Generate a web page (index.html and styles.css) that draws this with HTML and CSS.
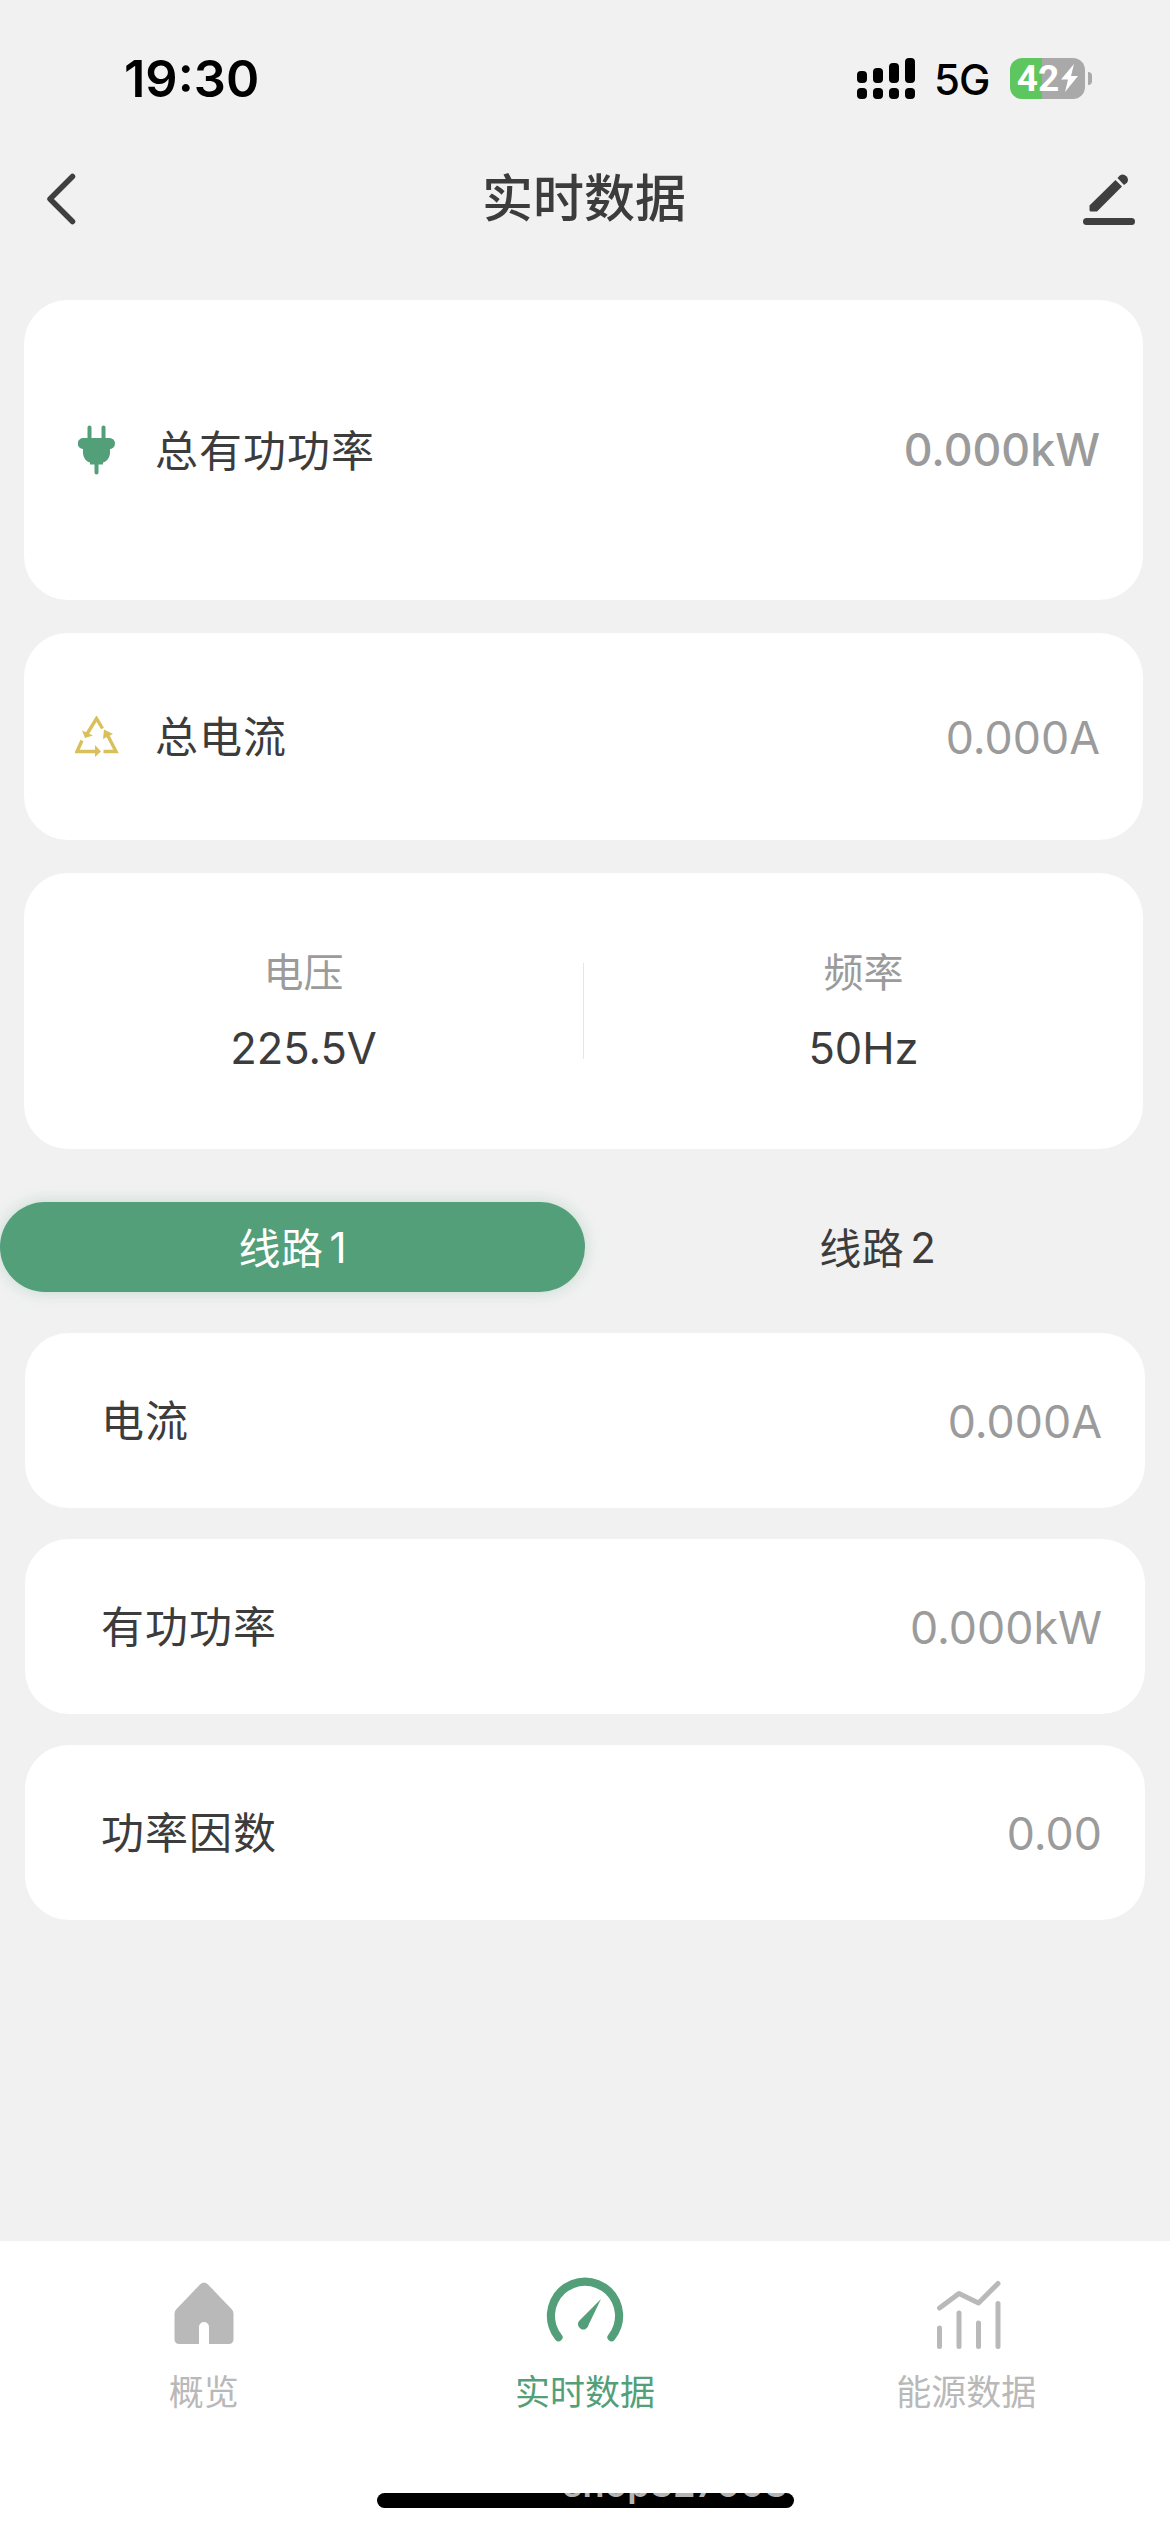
FILE: index.html
```html
<!DOCTYPE html>
<html lang="zh-CN">
<head>
<meta charset="utf-8">
<title>实时数据</title>
<link rel="stylesheet" href="styles.css">
</head>
<body>
<div class="app">
  <header class="status">
    <span class="clock">19:30</span>
    <div class="status-right">
      <svg class="signal" width="58" height="41" viewBox="0 0 58 41"><rect x="0" y="13" width="10" height="12" rx="4"/><rect x="16" y="10" width="10" height="15" rx="4"/><rect x="32" y="5" width="10" height="20" rx="4"/><rect x="48" y="0" width="10" height="25" rx="4"/><rect x="0" y="30" width="10" height="11" rx="4"/><rect x="16" y="30" width="10" height="11" rx="4"/><rect x="32" y="30" width="10" height="11" rx="4"/><rect x="48" y="30" width="10" height="11" rx="4"/></svg>
      <span class="network">5G</span>
      <div class="battery">
        <span class="battery-body">42<svg width="19" height="28" viewBox="0 0 19 28"><path fill="#fff" d="M14 0 1 15.500h7L5 28 18 12h-7z"/></svg></span>
        <i class="battery-cap"></i>
      </div>
    </div>
  </header>
  <nav class="titlebar">
    <svg class="back" width="30" height="52" viewBox="0 0 30 52"><path d="M25.500 3.500 3 26l22.500 22.500"/></svg>
    <h1>实时数据</h1>
    <svg class="edit" width="52" height="52" viewBox="0 0 52 52"><path d="M32.500 7 39 13.500 14 38.500H8q-1.500 0-1.500-1.500V32.500z"/><path d="M34.500 5 36.800 2.500a5.200 5.200 0 0 1 7.200 7.200L41 12z"/><rect x="0" y="45" width="52" height="7" rx="3.500"/></svg>
  </nav>
  <main>
    <section class="card card-power">
      <svg class="ico" width="44" height="50" viewBox="0 0 44 50"><path fill="#529f79" d="M9.500 13V2.500a2 2 0 0 1 4 0V13h10V2.500a2 2 0 0 1 4 0V13h4a5.500 5.500 0 0 1 0 11H32v3.500c0 5-3 9-7 10v2h-4.500V47.500a2 2 0 0 1-4 0V39.500H12v-2c-4-1-7-5-7-10V24a5.500 5.500 0 0 1 .5-11z"/></svg>
      <span class="label">总有功功率</span><span class="value strong">0.000kW</span>
    </section>
    <section class="card card-current">
      <svg class="ico cycle" width="44" height="42" viewBox="0 0 44 42"><g fill="none" stroke="#d9c05a" stroke-width="3.400"><path d="M27.500 12.500 21.500 2.500 12 18"/><path d="M7 24.500 2 35.500H20"/><path d="M28.500 35.500H41L32 18"/></g><g fill="#d9c05a"><path d="M7 14.500 10 22 18 19.500z"/><path d="M20 29 26 35.500 20 41z"/><path d="M28 23 29 13.500 38 18z"/></g></svg>
      <span class="label">总电流</span><span class="value">0.000A</span>
    </section>
    <section class="card card-pair">
      <div class="metric"><span class="name">电压</span><span class="num">225.5V</span></div>
      <i class="divider"></i>
      <div class="metric"><span class="name">频率</span><span class="num">50Hz</span></div>
    </section>
    <div class="tabs">
      <div class="tab active"><span class="line">线路</span><span>1</span></div>
      <div class="tab"><span class="line">线路</span><span>2</span></div>
    </div>
    <section class="rows">
      <div class="card row"><span class="label">电流</span><span class="value">0.000A</span></div>
      <div class="card row"><span class="label">有功功率</span><span class="value">0.000kW</span></div>
      <div class="card row"><span class="label">功率因数</span><span class="value">0.00</span></div>
    </section>
  </main>
  <footer class="bottom">
    <div class="nav">
      <div class="item"><svg width="80" height="80" viewBox="0 0 80 80"><path fill="#b9b9b9" d="M36.500 9q3.500-3 7 0L67.500 34q2 2 2 4.500V64q0 5-5 5H45V52a5 5 0 0 0-10 0V69H15.500q-5 0-5-5V38.500q0-2.500 2-4.500z"/></svg><span>概览</span></div>
      <div class="item on"><svg width="80" height="80" viewBox="0 0 80 80"><path fill="#529f79" fill-rule="evenodd" d="M10.500 65A38.200 38.200 0 1 1 69.500 65 4 4 0 0 1 63.500 59.500 30 30 0 1 0 16.500 59.500 4 4 0 0 1 10.500 65z"/><path fill="#529f79" d="M56 24 34.500 45.500a5.300 5.300 0 1 0 9 4.500z"/></svg><span>实时数据</span></div>
      <div class="item"><svg width="80" height="80" viewBox="0 0 80 80"><path fill="none" stroke="#b9b9b9" stroke-width="5" stroke-linecap="round" stroke-linejoin="round" d="M13.500 33 33 18.500 52.500 28 72 8.500M13.500 53V71.500M33 38V71.500M52.500 48V71.500M72 28.500V71.500"/></svg><span>能源数据</span></div>
    </div>
    <div class="home-indicator"><span>shop327003</span></div>
  </footer>
</div>
</body>
</html>
```
FILE: styles.css
```css
* { box-sizing: border-box; }
body { margin: 0; background: #f1f1f1; color: #3c3c3c; font-family: Inter, "Noto Sans CJK SC", sans-serif; }
.app { width: 1170px; height: 2532px; display: flex; flex-direction: column; overflow: hidden; }
.status { height: 141px; padding: 15px 78px 0 124px; display: flex; align-items: center; justify-content: space-between; color: #000; }
.clock { font-size: 50.5px; font-weight: 600; }
.status-right { display: flex; align-items: center; }
.network { margin: 2px 0 0 19px; width: 55px; font-size: 42px; font-weight: 450; letter-spacing: -1px; }
.battery { display: flex; align-items: center; margin-left: 21px; gap: 3px; }
.battery-body { width: 75px; height: 41px; padding-left: 1px; border-radius: 12px; display: flex; align-items: center; justify-content: center; gap: 1px; color: #fff; font-family: Roboto, sans-serif; font-size: 37px; font-weight: 700; background: linear-gradient(90deg, #5ec65f 32px, #a9a9a9 32px); }
.battery-cap { width: 4px; height: 13px; border-radius: 0 4px 4px 0; background: #a9a9a9; }
.titlebar { height: 159px; padding: 0 35px 44px 47px; display: flex; align-items: center; justify-content: space-between; }
.titlebar h1 { margin: 0 0 0 8px; font-size: 51px; font-weight: 500; line-height: 60px; }
.back { fill: none; stroke: #3f3f3f; stroke-width: 5.5; stroke-linecap: round; stroke-linejoin: round; }
.edit { fill: #3f3f3f; }
main { flex: 1; }
.card { background: #fff; border-radius: 44px; margin: 0 27px 33px 24px; display: flex; align-items: center; }
.card-power { height: 300px; padding: 0 43px 0 51px; }
.card-current { height: 207px; padding: 0 43px 0 51px; }
.ico { margin: 0 33px 0 3px; }
.cycle { margin: 0 36px 0 0; }
.label { flex: 1; padding-bottom: 5px; font-size: 43px; letter-spacing: 1px; }
.value { font-size: 44.7px; color: #9b9b9b; }
.card-current .value { padding-top: 2px; }
.strong { font-weight: 500; }
.card-pair { height: 276px; margin-bottom: 53px; }
.metric { flex: 1; display: flex; flex-direction: column; align-items: center; gap: 21px; padding-bottom: 2px; }
.divider { width: 1px; height: 96px; background: #e6e6e6; }
.name { font-size: 40px; line-height: 54px; color: #9b9b9b; }
.num { font-size: 43.5px; line-height: 54px; }
.tabs { display: flex; height: 90px; margin-bottom: 41px; }
.tab { flex: 1; display: flex; align-items: center; justify-content: center; gap: 6px; font-size: 42px; border-radius: 45px; }
.line { padding-bottom: 4px; letter-spacing: 0.5px; }
.active { background: #529f79; color: #fff; box-shadow: 0 0 16px rgba(82, 159, 121, .28); }
.row { height: 175px; margin: 0 25px 31px; padding: 0 43px 0 76px; }
.row .value { padding-top: 3px; }
.row .label { padding-bottom: 6px; }
.bottom { height: 291px; background: #fff; display: flex; flex-direction: column; align-items: center; }
.nav { display: flex; height: 252px; width: 1144px; padding-top: 34px; }
.item { flex: 1; display: flex; flex-direction: column; align-items: center; gap: 13px; font-size: 35px; line-height: 48px; color: #b9b9b9; }
.on { color: #529f79; }
.home-indicator { width: 417px; height: 15px; border-radius: 8px; background: #000; overflow: hidden; color: #b5b5b5; font-size: 36px; font-weight: 600; }
.home-indicator span { display: block; margin: -27px 0 0 186px; line-height: 36px; letter-spacing: 0.3px; }
```
